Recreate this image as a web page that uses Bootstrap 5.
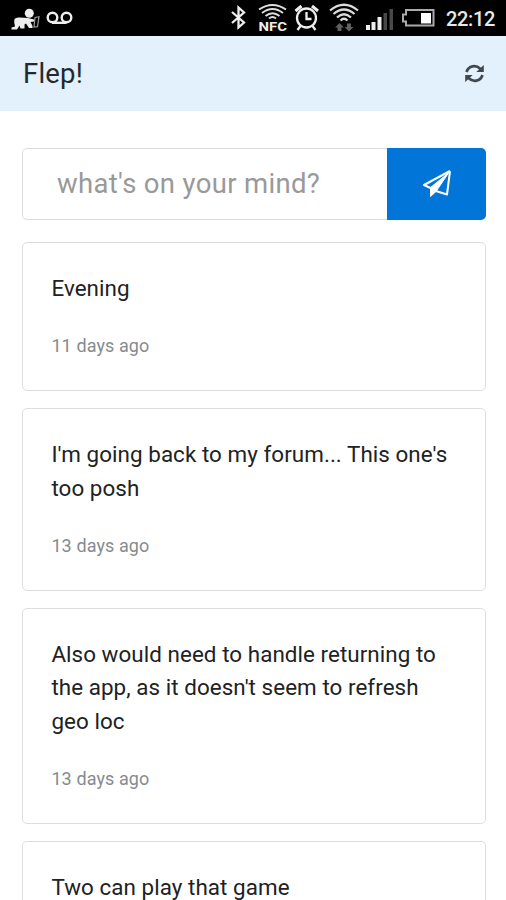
<!DOCTYPE html>
<html lang="en">
<head>
<meta charset="utf-8">
<meta name="viewport" content="width=device-width, initial-scale=1">
<title>Flep!</title>
<link href="https://cdn.jsdelivr.net/npm/bootstrap@5.3.0/dist/css/bootstrap.min.css" rel="stylesheet">
<style>
html{overflow:hidden}
body{font-family:Roboto,"Liberation Sans",sans-serif;font-size:22.4px;color:#202224;height:900px;overflow:hidden;background:#fff}
.status{height:36px;background:#000;color:#e8e8e8}
.status svg{height:36px;flex:none}
.clock{font-size:20px;font-weight:500;width:66px;padding-left:6px;line-height:38px;letter-spacing:-.35px}
.topbar{height:75px;background:#e3f1fc;padding:0 21px 0 23px}
.topbar .navbar-brand{font-size:27.5px;line-height:76px;color:#24292d;letter-spacing:.2px}
.feed{height:789px;overflow:hidden;padding:37px 20px 0 22px}
.composer{height:72px;margin-bottom:22px}
.composer .form-control{font-size:27.5px;padding:0 34px;border-color:#dcdcdc;border-radius:5px;letter-spacing:.33px}
.composer .form-control::placeholder{color:#999;opacity:1}
.send{width:99px;background:#0275d8;border-radius:5px;padding:0}
.post{border:1px solid #dedede;border-radius:5px;margin-bottom:17px}
.post .card-body{padding:29.2px 24px 26.8px 28.4px}
.post p{line-height:33.5px;margin-bottom:23.6px;letter-spacing:.06px}
.post .age{font-size:18px;line-height:34px;color:#868b8f;letter-spacing:.1px}
</style>
<script src="https://cdn.jsdelivr.net/npm/bootstrap@5.3.0/dist/js/bootstrap.bundle.min.js"></script>
</head>
<body>
<div class="status d-flex justify-content-between">
  <div class="d-flex">
    <svg width="44" viewBox="0 0 44 36" fill="#eee"><circle cx="29.3" cy="13.3" r="4.500"/><path d="M14.500 19Q16 17 20 17.500L28 18L34 19.500V21.500L30.500 22L32.500 26V28H29L26 23.500L24.500 24.500V28.500H20.500L19.500 25.500L17 29.500H11.500V27.500L15 26.500Q13.500 22 14.500 19Z"/><path d="M35 17.500l4-.8-1.500 10-3.500.3z" fill="#000" stroke="#999" stroke-width="1.200"/></svg>
    <svg width="32" viewBox="44 0 32 36" fill="none" stroke="#eee" stroke-width="2.400"><circle cx="52.500" cy="17.500" r="4.800"/><circle cx="66.500" cy="17.500" r="4.800"/><path d="M52 22.800h14.500"/></svg>
  </div>
  <div class="d-flex">
    <svg width="26" viewBox="226 0 26 36" fill="none" stroke="#eee" stroke-width="2.300"><path d="M232 12l12 10.500-5.500 5V7.500l5.500 5L232 23"/></svg>
    <svg width="39" viewBox="252 0 39 36" fill="none" stroke="#ddd" stroke-width="2"><path d="M259 9.500q13.500-9 27 0M262 13q10.500-8 21 0M265.500 16q7-5.500 14 0M269 18.500q3.500-3 7 0"/><text x="258.500" y="31" font-size="13.500" font-weight="700" textLength="28.500" lengthAdjust="spacingAndGlyphs" fill="#eee" stroke="none">NFC</text></svg>
    <svg width="33" viewBox="291 0 33 36" fill="none" stroke="#eee" stroke-width="2.300"><circle cx="306.500" cy="18" r="9.500"/><path d="M306.500 12v7h5M300.500 26l-3 4M312.500 26l3 4"/><path d="M295.500 11l6-5M312 6l6 5" stroke-width="3"/></svg>
    <svg width="39" viewBox="324 0 39 36" fill="none" stroke="#ddd" stroke-width="2.200"><path d="M330 10.500q14-11.500 28 0M333.500 14q10.500-9 21 0M337 17.500q7-6.500 14 0M340.500 20.500q3.500-3.500 7 0"/><path d="M339.500 23l4.500 4.500h-2.500V31h-4v-3.500H335zM349 31.500l-4.500-4.500h2.500v-3.500h4V27h2.500z" fill="#606060" stroke="none"/></svg>
    <svg width="35" viewBox="363 0 35 36" fill="#eee"><path d="M366 25h4v5h-4zM371.500 22h4v8h-4zM377.500 17h4v13h-4z"/><path d="M383.500 13h3.500v17h-3.500zM389.500 9h3.500v21h-3.500z" fill="#484848"/></svg>
    <svg width="42" viewBox="398 0 42 36" fill="none" stroke="#aaa" stroke-width="2"><path d="M406 10h27.500v15.500H406v-4h-3v-7h3z"/><path d="M421 13h10v10.500h-10z" fill="#fff" stroke="none"/></svg>
    <div class="clock">22:12</div>
  </div>
</div>
<nav class="navbar topbar d-flex flex-nowrap justify-content-between align-items-center">
  <span class="navbar-brand p-0 m-0">Flep!</span>
  <svg width="21" height="20" viewBox="0 0 21 20" fill="none" stroke="#41484e" stroke-width="2.700"><path d="M2.500 8C4.500 1.500 12 .5 16.500 5M18.500 11C16.500 17.500 9 18.500 4.500 14"/><path d="M19.800 1v7h-7.500zM1.200 18v-7h7.500z" fill="#41484e" stroke="none"/></svg>
</nav>
<main class="feed">
  <div class="input-group composer">
    <input class="form-control" type="text" placeholder="what's on your mind?" aria-label="what's on your mind?">
    <button class="btn send d-flex align-items-center justify-content-center" type="button" aria-label="Send">
      <svg width="30" height="30" viewBox="0 0 30 30" fill="none" stroke="#fff" stroke-width="2" stroke-linejoin="round"><path d="M28 2L2 16l6.500 3M28 2l-3 23.500-11-3.500"/><path d="M26.500 4L8.500 18.500V27.500l5.500-5z" fill="#fff" stroke-width="1"/></svg>
    </button>
  </div>
  <article class="card post"><div class="card-body"><p>Evening</p><div class="age">11 days ago</div></div></article>
  <article class="card post"><div class="card-body"><p>I'm going back to my forum... This one's too posh</p><div class="age">13 days ago</div></div></article>
  <article class="card post"><div class="card-body"><p>Also would need to handle returning to the app, as it doesn't seem to refresh geo loc</p><div class="age">13 days ago</div></div></article>
  <article class="card post border-bottom-0 rounded-bottom-0 mb-0"><div class="card-body pb-0"><p class="mb-0">Two can play that game</p></div></article>
</main>
</body>
</html>
